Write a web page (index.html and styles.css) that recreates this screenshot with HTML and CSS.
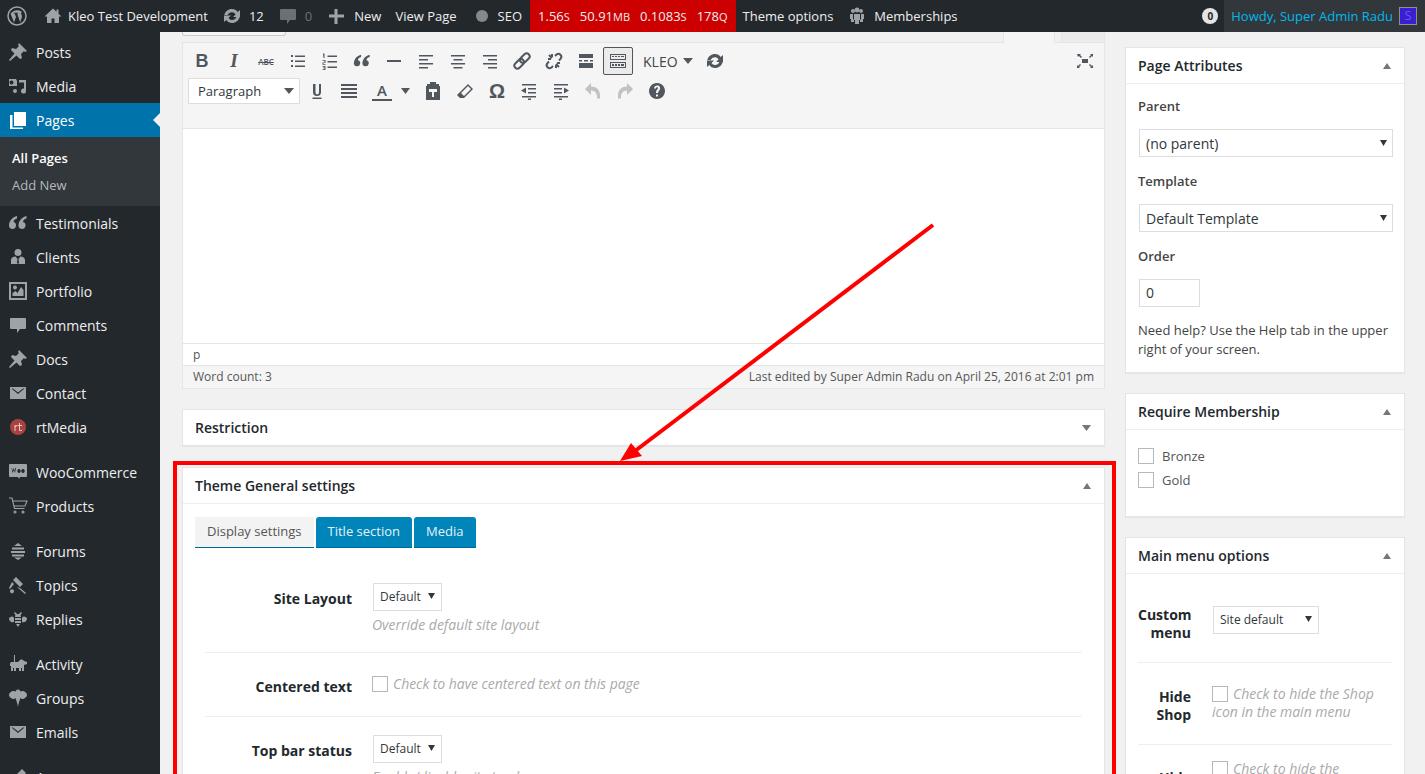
FILE: index.html
```html
<!DOCTYPE html>
<html lang="en">
<head>
    <meta charset="UTF-8">
    <meta name="viewport" content="width=device-width, initial-scale=1.0">
    <title>Edit Page</title>
    <link rel="stylesheet" href="styles.css">
</head>
<body>
    <svg class="defs" width="0" height="0">
        <symbol id="pin" viewBox="0 0 20 20"><path d="M11 1l8 8-2 1-1-1-3 3 1 4-2 1-3.500-3.500L2 19l-1-1 5.500-6.500L3 8l1-2 4 1 3-3-1-1z"/></symbol>
        <symbol id="mail" viewBox="0 0 20 20"><path d="M2 4h16v12H2zM3.500 5.500L10 11l6.500-5.500H15L10 9.500 5 5.500z" fill-rule="evenodd"/></symbol>
        <symbol id="bubble" viewBox="0 0 20 20"><path d="M3 3h14a1 1 0 0 1 1 1v9a1 1 0 0 1-1 1h-5l-3 4v-4H3a1 1 0 0 1-1-1V4a1 1 0 0 1 1-1z"/></symbol>
        <symbol id="quote" viewBox="0 0 20 20"><path d="M9 3C4.500 4 1 8 1 12.500a3.500 3.500 0 1 0 4.500-3.400C5.700 7 7 6 9 5.500zM18.500 3c-4.500 1-8 5-8 9.500a3.500 3.500 0 1 0 4.500-3.400c.2-2.100 1.500-3.100 3.500-3.600z"/></symbol>
        <symbol id="sync" viewBox="0 0 20 20"><path d="M10 3c2.500 0 4.500 1.200 5.700 3L18 4v7h-7l2.500-2.600C12.700 7 11.500 6.200 10 6.200 8 6.200 6.400 7.400 5.700 9H2.300C3.100 5.600 6.200 3 10 3zM2 9.500h7L6.500 12c.8 1.200 2 2 3.500 2 2 0 3.600-1.300 4.300-3h3.400c-.8 3.400-3.900 6-7.700 6-2.500 0-4.500-1.200-5.700-3L2 16z"/></symbol>
        <symbol id="sel" viewBox="0 0 10 6" preserveAspectRatio="none"><path d="M0 0h10L5 6z"/></symbol>
    </svg>

    <header class="adminbar">
        <div class="bar-item wp-logo">
            <svg width="20" height="20" viewBox="0 0 20 20"><circle cx="10" cy="10" r="9" fill="none" stroke="#9ea3a8" stroke-width="1.500"/><path d="M3.500 7.500L7 16.500l2-5.500-1.300-3.500H6.700V6.800h4.500v.7h-1l3 9 1.500-5c.5-1.700 0-2.500-.6-3.500-.5-.8 0-1.800 1-1.800-3-3-8.500-2.600-11 1z" fill="#9ea3a8"/></svg>
        </div>
        <div class="bar-item">
            <svg class="bar-icon home-icon" width="20" height="20" viewBox="0 0 20 20"><path d="M10 2.500L1.500 10.500h2.500V17h4.500v-4.500h3V17H16v-6.500h2.500L15.500 7.700V3.500h-2v2.300z" fill="#9ea3a8"/></svg>
            <span>Kleo Test Development</span>
        </div>
        <div class="bar-item">
            <svg class="bar-icon" width="20" height="20" fill="#9ea3a8"><use href="#sync"/></svg>
            <span>12</span>
        </div>
        <div class="bar-item muted">
            <svg class="bar-icon" width="20" height="20" fill="#6b7075"><use href="#bubble"/></svg>
            <span>0</span>
        </div>
        <div class="bar-item">
            <svg class="bar-icon plus-icon" width="20" height="20" viewBox="0 0 20 20"><path d="M8.500 3h3v5.500H18v3h-6.500V18h-3v-6.500H3v-3h5.500z" fill="#9ea3a8"/></svg>
            <span>New</span>
        </div>
        <div class="bar-item">View Page</div>
        <div class="bar-item seo-item">
            <span class="seo-dot"></span>
            <span>SEO</span>
        </div>
        <div class="bar-item query-monitor">
            <span>1.56<small>S</small></span>
            <span>50.91<small>MB</small></span>
            <span>0.1083<small>S</small></span>
            <span>178<small>Q</small></span>
        </div>
        <div class="bar-item">Theme options</div>
        <div class="bar-item">
            <svg class="bar-icon" width="20" height="20" viewBox="0 0 20 20" fill="#9ea3a8"><circle cx="6" cy="5" r="2"/><circle cx="14" cy="5" r="2"/><circle cx="10" cy="4" r="2.400"/><path d="M7 8h6v6h-1v4H8v-4H7zM3 8h3v5l1 1v2H4v-3H3zM14 8h3v5h-1v3h-3v-2l1-1z"/></svg>
            <span>Memberships</span>
        </div>
        <div class="bar-right">
            <span class="zero-badge">0</span>
            <div class="howdy">
                <span>Howdy, Super Admin Radu</span>
                <span class="avatar">S</span>
            </div>
        </div>
    </header>

    <div class="wrap">
        <nav class="sidebar">
            <ul class="menu">
                <li class="menu-item"><svg width="20" height="20"><use href="#pin"/></svg>Posts</li>
                <li class="menu-item">
                    <svg width="20" height="20" viewBox="0 0 20 20"><path d="M1 3h7l1 2v5H1zM3.500 4.500a2 2 0 1 0 .01 0zM11 4h7v11a2.500 2.500 0 1 1-2-2.400V6.500h-5zM7 13a2 2 0 1 1-2 2 2 2 0 0 1 2-2z" fill-rule="evenodd"/></svg>Media
                </li>
                <li class="menu-item current">
                    <svg width="20" height="20" viewBox="0 0 20 20"><path d="M6 2h12v14H6zM2 5h2.500v12.500H15V19H2z"/></svg>Pages
                </li>
                <li class="submenu">
                    <div class="sub-link active">All Pages</div>
                    <div class="sub-link">Add New</div>
                </li>
                <li class="menu-item"><svg width="20" height="20"><use href="#quote"/></svg>Testimonials</li>
                <li class="menu-item">
                    <svg width="20" height="20" viewBox="0 0 20 20"><circle cx="10" cy="5.500" r="3.500"/><path d="M3 17v-4c0-2 2-3.500 4.500-3.500L9.500 12 9 16l1 1 1-1-.5-4 2-2.500c2.500 0 4.500 1.500 4.500 3.500v4z"/></svg>Clients
                </li>
                <li class="menu-item">
                    <svg width="20" height="20" viewBox="0 0 20 20"><path d="M1 1h18v18H1zM3 3v14h14V3z" fill-rule="evenodd"/><path d="M4.500 15v-3l3-2 2 2 3.500-6 2.500 3v6zM7 4.500a2 2 0 1 1-.01 0z"/></svg>Portfolio
                </li>
                <li class="menu-item"><svg width="20" height="20"><use href="#bubble"/></svg>Comments</li>
                <li class="menu-item"><svg width="20" height="20"><use href="#pin"/></svg>Docs</li>
                <li class="menu-item"><svg width="20" height="20"><use href="#mail"/></svg>Contact</li>
                <li class="menu-item">
                    <svg width="20" height="20" viewBox="0 0 20 20"><circle cx="10" cy="10" r="8" fill="#a8433f"/><path d="M6.500 8h1v1c.5-.8 1-1 2-1v1.200c-1.200 0-2 .3-2 1.800v3h-1zM11 6h1v2h2v1h-2v3.500c0 .7.500.8 2 .6V14c-2 .3-3 0-3-1.500V9h-1V8h1z" fill="#e9c9c7"/></svg>rtMedia
                </li>
                <li class="menu-sep"></li>
                <li class="menu-item">
                    <svg width="20" height="20" viewBox="0 0 20 20"><path d="M2 2h16a1 1 0 0 1 1 1v11a1 1 0 0 1-1 1h-6l-1 2-1-2H2a1 1 0 0 1-1-1V3a1 1 0 0 1 1-1zM3.500 6l1 5 1.500-3 1 3 1-5h-.8l-.5 3-1-3-1.200 3-.5-3zM11 7a1.700 2 0 1 0 .01 0zM15 7a1.700 2 0 1 0 .01 0z" fill-rule="evenodd"/></svg>WooCommerce
                </li>
                <li class="menu-item">
                    <svg class="cart" width="20" height="20" viewBox="0 0 20 20"><path d="M1 2h3l2.500 10.500h10M5 5h14l-2 5H6"/><circle cx="7" cy="16" r="1"/><circle cx="15" cy="16" r="1"/></svg>Products
                </li>
                <li class="menu-sep"></li>
                <li class="menu-item">
                    <svg width="20" height="20" viewBox="0 0 20 20"><path d="M10 2l4 3H6zM4 6.500h12v2H4zM3 10h14v2H3zM4 13.500h12v2H4zM6 16.500h8L10 19z"/></svg>Forums
                </li>
                <li class="menu-item">
                    <svg width="20" height="20" viewBox="0 0 20 20"><path d="M8 2l7 7-3 3-7-7zM4 7l2 2-4 5-1-1zM9 12l3 1 6 5-1 1zM2 16a2 2 0 1 1 3 2 2 2 0 0 1-3-2z"/></svg>Topics
                </li>
                <li class="menu-item">
                    <svg width="20" height="20" viewBox="0 0 20 20"><path d="M7 3l2 2h2l2-2 1 1-1.500 2a3 3 0 0 1 .5 2H7a3 3 0 0 1 .5-2L6 4zM1 9c2-2 4-2 5 0v4C4 14 1 13 1 9zM19 9c-2-2-4-2-5 0v4c2 1 5 0 5-4zM7 9h6v2H7zM7 12h6v2H7zM8 15h4l-2 3z"/></svg>Replies
                </li>
                <li class="menu-sep"></li>
                <li class="menu-item">
                    <svg width="20" height="20" viewBox="0 0 20 20"><path d="M6 1h1v7H6zM2 10c0-1.500 1-2 2-2h6l2-2c2-1 3 0 4 1l3 1v2l-3 1v6h-2v-3h-1v3h-2v-3H8v3H6v-3H5v3H3v-5H2z"/></svg>Activity
                </li>
                <li class="menu-item">
                    <svg width="20" height="20" viewBox="0 0 20 20"><path d="M5.500 3c2 0 3.500 2 3.500 4s-2 4-3.500 4S1 9 1 7s2.500-4 4.500-4zM14.500 3c2 0 4.500 2 4.500 4s-3 4-4.500 4S11 9 11 7s1.500-4 3.500-4zM10 1.500c2 0 3 2 3 5S11 13 10 19c-1-6-3-9.500-3-12.500s1-5 3-5z"/></svg>Groups
                </li>
                <li class="menu-item"><svg width="20" height="20"><use href="#mail"/></svg>Emails</li>
                <li class="menu-sep"></li>
                <li class="menu-item">
                    <svg width="20" height="20" viewBox="0 0 20 20"><path d="M14 2l4 4-7 7-4-4zM6 10l4 4c-1 3-4 4-8 4 2-2 1-6 4-8z"/></svg>Appearance
                </li>
            </ul>
        </nav>

        <main class="content">
            <div class="center-col">
                <div class="editor-tabs">
                    <div class="tab-stub"></div>
                    <div class="tab-gap"></div>
                    <div class="tab-visual"></div>
                    <div class="tab-text"></div>
                </div>
                <div class="editor">
                    <div class="toolbar">
                        <div class="tool-row">
                            <span class="tool glyph-b">B</span>
                            <span class="tool glyph-i">I</span>
                            <span class="tool glyph-abc">ABC</span>
                            <span class="tool"><svg width="20" height="20" viewBox="0 0 20 20"><path d="M3 4h2v2H3zM3 9h2v2H3zM3 14h2v2H3zM7 4.500h10V6H7zM7 9.500h10V11H7zM7 14.500h10V16H7z"/></svg></span>
                            <span class="tool"><svg width="20" height="20" viewBox="0 0 20 20"><path d="M3 2.500h1.500V7h-1zM2.500 9h3v3h-2v1h2v.8h-3V11.500h2v-1.700h-2zM2.500 15h3v4h-3v-.7h2v-1h-1.500v-.7h1.500v-.9h-2zM7.500 4.500H17V6H7.500zM7.500 10H17v1.500H7.500zM7.500 15.500H17V17H7.500z"/></svg></span>
                            <span class="tool"><svg width="18" height="18"><use href="#quote"/></svg></span>
                            <span class="tool"><svg width="20" height="20" viewBox="0 0 20 20"><path d="M3 9h14v2H3z"/></svg></span>
                            <span class="tool"><svg width="20" height="20" viewBox="0 0 20 20"><path d="M3 4h14v1.500H3zM3 8h9v1.500H3zM3 12h14v1.500H3zM3 16h9v1.500H3z"/></svg></span>
                            <span class="tool"><svg width="20" height="20" viewBox="0 0 20 20"><path d="M3 4h14v1.500H3zM5.500 8h9v1.500h-9zM3 12h14v1.500H3zM5.500 16h9v1.500h-9z"/></svg></span>
                            <span class="tool"><svg width="20" height="20" viewBox="0 0 20 20"><path d="M3 4h14v1.500H3zM8 8h9v1.500H8zM3 12h14v1.500H3zM8 16h9v1.500H8z"/></svg></span>
                            <span class="tool"><svg class="chain" width="20" height="20" viewBox="0 0 20 20"><g transform="rotate(-45 10 10)"><rect x="0.500" y="7" width="11" height="6" rx="3"/><rect x="8.500" y="7" width="11" height="6" rx="3"/></g></svg></span>
                            <span class="tool"><svg class="chain" width="20" height="20" viewBox="0 0 20 20"><path d="M11 5l1.500-1.500a3 3 0 0 1 4.200 4.200L15 9.500M9 15l-1.500 1.500a3 3 0 0 1-4.200-4.200L5 10.500M5 4l3 3M15 16l-3-3M4 8h3M13 12h3M8 3v3M12 14v3"/></svg></span>
                            <span class="tool"><svg width="20" height="20" viewBox="0 0 20 20"><path d="M3 3h14v4H3zM3 9h3v1.500H3zM8 9h4v1.500H8zM14 9h3v1.500h-3zM3 12h14v5H3z"/></svg></span>
                            <span class="tool tool-on"><svg width="20" height="20" viewBox="0 0 20 20"><path d="M2 3h16v6H2zM3 4v4h14V4zM4 5h2v1H4zM7 5h2v1H7zM10 5h2v1h-2zM13 5h3v1h-3zM2 11h16v6H2zM3 12v4h14v-4zM4 13h2v2H4zM7 13h2v2H7zM10 13h2v2h-2zM13 13h3v2h-3z" fill-rule="evenodd"/></svg></span>
                            <span class="kleo-menu">KLEO<svg width="10" height="6" fill="#50575e"><use href="#sel"/></svg></span>
                            <span class="tool"><svg width="20" height="20"><use href="#sync"/></svg></span>
                            <span class="tool tool-full"><svg width="20" height="20" viewBox="0 0 20 20"><path d="M7 8h6v4H7zM2 3h4L5 4l2 2-1 1-2-2-1 1zM18 3v3l-1-1-2 2-1-1 2-2-1-1zM2 17v-3l1 1 2-2 1 1-2 2 1 1zM18 17h-3l1-1-2-2 1-1 2 2 1-1z"/></svg></span>
                        </div>
                        <div class="tool-row">
                            <span class="format-select">Paragraph<svg width="10" height="6" fill="#50575e"><use href="#sel"/></svg></span>
                            <span class="tool"><svg width="20" height="20" viewBox="0 0 20 20"><path d="M6 3h2.500v8c0 1.500.6 2.300 1.700 2.300s1.800-.8 1.800-2.300V3H14v8c0 3-1.700 4-4 4s-4-1-4-4zM5.500 16.500h9V18h-9z"/></svg></span>
                            <span class="tool"><svg width="20" height="20" viewBox="0 0 20 20"><path d="M2 3h16v2H2zM2 7h16v2H2zM2 11h16v2H2zM2 15h16v2H2z"/></svg></span>
                            <span class="tool color-tool"><span class="color-a">A</span><svg width="9" height="6" fill="#50575e"><use href="#sel"/></svg></span>
                            <span class="tool"><svg width="20" height="20" viewBox="0 0 20 20"><path d="M7 1h6v2h3v2H4V3h3zM3 5h14v14H3zM6 8v3h3v5h2v-5h3V8z" fill-rule="evenodd"/></svg></span>
                            <span class="tool"><svg width="20" height="20" viewBox="0 0 20 20"><path d="M13 3l5 5-9 9H5l-3-3zM13 5L6 12l3 3 7-7z" fill-rule="evenodd"/></svg></span>
                            <span class="tool glyph-omega">Ω</span>
                            <span class="tool"><svg width="20" height="20" viewBox="0 0 20 20"><path d="M3 3h14v1.500H3zM9 7h8v1.500H9zM9 11h8v1.500H9zM3 15h14v1.500H3zM7 6.500v6L2 9.500zM9 17.500h3V19H9z"/></svg></span>
                            <span class="tool"><svg width="20" height="20" viewBox="0 0 20 20"><path d="M3 3h14v1.500H3zM3 7h8v1.500H3zM3 11h8v1.500H3zM3 15h14v1.500H3zM13 6.500v6l5-3zM8 17.500h3V19H8z"/></svg></span>
                            <span class="tool tool-off"><svg width="20" height="20" viewBox="0 0 20 20"><path d="M2 8l6-6v3.500c5 0 9 3 9 9v3h-3v-2c0-3-2-6-6-6V14z"/></svg></span>
                            <span class="tool tool-off"><svg width="20" height="20" viewBox="0 0 20 20"><path d="M18 8l-6-6v3.500c-5 0-9 3-9 9v3h3v-2c0-3 2-6 6-6V14z"/></svg></span>
                            <span class="tool"><svg width="20" height="20" viewBox="0 0 20 20"><path d="M10 2a8 8 0 1 1-.01 0zM9 13.500v2h2v-2zM7 7.500h2c0-2 2.500-1.500 2-.2C10.700 8.500 9 9 9 12h2c0-2 2.500-2.500 2-5.500C12.500 3.500 7 4 7 7.500z" fill-rule="evenodd"/></svg></span>
                        </div>
                    </div>
                    <div class="edit-area"></div>
                    <div class="status-path">p</div>
                    <div class="status-info">
                        <span>Word count: 3</span>
                        <span>Last edited by Super Admin Radu on April 25, 2016 at 2:01 pm</span>
                    </div>
                </div>

                <section class="box box-closed">
                    <div class="box-head">
                        <h2>Restriction</h2>
                        <svg class="toggle" width="9" height="6" fill="#72777c"><use href="#sel"/></svg>
                    </div>
                </section>

                <section class="box">
                    <div class="box-head">
                        <h2>Theme General settings</h2>
                        <span class="toggle-up"></span>
                    </div>
                    <div class="theme-body">
                        <div class="theme-tabs">
                            <span class="theme-tab selected">Display settings</span>
                            <span class="theme-tab">Title section</span>
                            <span class="theme-tab">Media</span>
                        </div>
                        <div class="field">
                            <label class="field-label">Site Layout</label>
                            <div class="field-main">
                                <span class="small-select">Default<svg width="7" height="6" fill="#32373c"><use href="#sel"/></svg></span>
                                <p class="hint">Override default site layout</p>
                            </div>
                        </div>
                        <div class="field field-check">
                            <label class="field-label">Centered text</label>
                            <div class="field-main check-line">
                                <span class="check"></span>
                                <span class="hint">Check to have centered text on this page</span>
                            </div>
                        </div>
                        <div class="field field-last">
                            <label class="field-label">Top bar status</label>
                            <div class="field-main">
                                <span class="small-select">Default<svg width="7" height="6" fill="#32373c"><use href="#sel"/></svg></span>
                                <p class="hint">Enable/disable site top bar</p>
                            </div>
                        </div>
                    </div>
                </section>
            </div>

            <aside class="side-col">
                <section class="box">
                    <div class="box-head">
                        <h2>Page Attributes</h2>
                        <span class="toggle-up"></span>
                    </div>
                    <div class="attr-body">
                        <p class="attr-label">Parent</p>
                        <span class="wide-select">(no parent)<svg width="7" height="6" fill="#32373c"><use href="#sel"/></svg></span>
                        <p class="attr-label">Template</p>
                        <span class="wide-select">Default Template<svg width="7" height="6" fill="#32373c"><use href="#sel"/></svg></span>
                        <p class="attr-label">Order</p>
                        <span class="order-input">0</span>
                        <p class="attr-help">Need help? Use the Help tab in the upper right of your screen.</p>
                    </div>
                </section>
                <section class="box">
                    <div class="box-head">
                        <h2>Require Membership</h2>
                        <span class="toggle-up"></span>
                    </div>
                    <div class="member-body">
                        <div class="member-row"><span class="check"></span>Bronze</div>
                        <div class="member-row"><span class="check"></span>Gold</div>
                    </div>
                </section>
                <section class="box">
                    <div class="box-head">
                        <h2>Main menu options</h2>
                        <span class="toggle-up"></span>
                    </div>
                    <div class="menu-opts">
                        <div class="opt opt-first">
                            <label class="opt-label">Custom menu</label>
                            <span class="small-select site-default">Site default<svg width="7" height="6" fill="#32373c"><use href="#sel"/></svg></span>
                        </div>
                        <div class="opt">
                            <label class="opt-label">Hide Shop</label>
                            <p class="hint"><span class="check"></span>Check to hide the Shop icon in the main menu</p>
                        </div>
                        <div class="opt opt-last">
                            <label class="opt-label">Hide</label>
                            <p class="hint"><span class="check"></span>Check to hide the</p>
                        </div>
                    </div>
                </section>
            </aside>
        </main>
    </div>

    <!-- annotation drawn on top of the screenshot -->
    <div class="red-frame"></div>
    <svg class="red-arrow" width="340" height="260" viewBox="0 0 340 260">
        <path d="M313 3L15 229" stroke="#f00" stroke-width="4" fill="none"/>
        <path d="M0 239L11 221 22 234z" fill="#f00"/>
    </svg>
</body>
</html>
```

FILE: styles.css
```css
* {
    box-sizing: border-box;
    margin: 0;
    padding: 0;
}
html, body {
    width: 100%;
    height: 100%;
    overflow: hidden;
}
body {
    background-color: #f1f1f1;
    color: #444;
    font-family: "Open Sans", sans-serif;
    font-size: 13px;
}
.defs {
    display: block;
    height: 0;
}

/* admin bar */
.adminbar {
    display: flex;
    height: 32px;
    background-color: #23282d;
    color: #eee;
    font-size: 13px;
    line-height: 32px;
}
.bar-item {
    display: flex;
    align-items: center;
    padding: 0 7px;
    white-space: nowrap;
}
.bar-icon {
    margin-right: 7px;
}
.home-icon {
    margin-right: 5px;
}
.plus-icon {
    margin-right: 8px;
}
.wp-logo {
    width: 36px;
}
.muted {
    color: #6b7075;
}
.seo-item {
    margin-right: 1px;
}
.seo-dot {
    width: 12px;
    height: 12px;
    margin: 0 10px 0 5px;
    border-radius: 50%;
    background-color: #888;
}
.query-monitor {
    gap: 10px;
    padding: 0 8px;
    background-color: #c00;
    color: #eee;
}
.query-monitor small {
    font-size: 11px;
}
.bar-right {
    display: flex;
    align-items: center;
    margin-left: auto;
}
.zero-badge {
    width: 16px;
    height: 16px;
    margin-right: 6px;
    border-radius: 50%;
    background-color: #e4e4e4;
    color: #23282d;
    font-size: 10px;
    font-weight: 700;
    line-height: 16px;
    text-align: center;
}
.howdy {
    display: flex;
    align-items: center;
    gap: 6px;
    height: 32px;
    padding: 0 8px 0 7px;
    background-color: #32373c;
    color: #00b9eb;
}
.avatar {
    width: 18px;
    height: 18px;
    border: 1px solid #8d8f94;
    background-color: #3a1fd1;
    color: #6a55e8;
    font-size: 13px;
    line-height: 15px;
    text-align: center;
}

/* left menu */
.wrap {
    display: flex;
    height: 742px;
}
.sidebar {
    flex: none;
    width: 160px;
    overflow: hidden;
    background-color: #23282d;
    color: #eee;
    font-size: 14px;
}
.menu {
    padding-top: 3px;
    list-style: none;
}
.menu-item {
    display: flex;
    align-items: center;
    gap: 8px;
    height: 34px;
    padding-left: 8px;
    white-space: nowrap;
}
.menu-item svg {
    flex: none;
    fill: #9ea3a8;
}
.menu-item .cart {
    fill: none;
    stroke: #9ea3a8;
    stroke-width: 1.100;
}
.menu-sep {
    height: 11px;
}
.current {
    position: relative;
    background-color: #0073aa;
    color: #fff;
}
.menu-item.current svg {
    fill: #fff;
}
.current::after {
    content: "";
    position: absolute;
    right: 0;
    top: 10px;
    border: 7px solid transparent;
    border-right-color: #f1f1f1;
    border-left-width: 0;
}
.submenu {
    padding: 8px 0 7px;
    background-color: #32373c;
    font-size: 13px;
}
.sub-link {
    padding-left: 12px;
    color: #b4b9be;
    line-height: 27px;
}
.sub-link.active {
    color: #fff;
    font-weight: 600;
}

/* main columns */
.content {
    display: flex;
    flex: 1;
    gap: 20px;
    padding: 0 20px 0 22px;
    overflow: hidden;
}
.center-col {
    flex: none;
    width: 923px;
}
.side-col {
    flex: none;
    width: 280px;
    padding-top: 15px;
}

/* editor */
.editor-tabs {
    display: flex;
    height: 10px;
}
.tab-stub {
    width: 104px;
    height: 4px;
    border: 1px solid #ccc;
    border-top: 0;
    border-radius: 0 0 3px 3px;
    background-color: #f5f5f5;
}
.tab-gap {
    width: 717px;
}
.tab-visual {
    position: relative;
    z-index: 1;
    width: 52px;
    height: 11px;
    border-left: 1px solid #e5e5e5;
    border-right: 1px solid #e5e5e5;
    background-color: #f5f5f5;
}
.tab-text {
    width: 44px;
    margin-left: 6px;
    border-left: 1px solid #e5e5e5;
    border-right: 1px solid #e5e5e5;
    background-color: #ebebeb;
}
.editor {
    border: 1px solid #e5e5e5;
    background-color: #f5f5f5;
}
.toolbar {
    height: 86px;
    padding: 3px 4px 0;
    border-bottom: 1px solid #e5e5e5;
}
.tool-row {
    display: flex;
    align-items: center;
    gap: 2px;
    height: 30px;
}
.tool {
    display: flex;
    flex: none;
    align-items: center;
    justify-content: center;
    width: 30px;
    height: 28px;
    color: #50575e;
}
.tool svg {
    fill: #50575e;
}
.tool .chain {
    fill: none;
    stroke: #50575e;
    stroke-width: 2;
}
.tool-on {
    border: 1px solid #555;
    border-radius: 2px;
    background-color: #ebebeb;
}
.tool-off svg {
    fill: #c0c2c4;
}
.tool-full {
    margin-left: auto;
}
.glyph-b {
    font-family: "Liberation Sans", sans-serif;
    font-size: 18px;
    font-weight: 700;
}
.glyph-i {
    font-family: "Liberation Serif", serif;
    font-size: 19px;
    font-style: italic;
    font-weight: 700;
}
.glyph-abc {
    font-size: 8px;
    font-weight: 600;
    text-decoration: line-through;
}
.glyph-omega {
    font-family: "Liberation Sans", sans-serif;
    font-size: 20px;
    font-weight: 700;
}
.kleo-menu {
    display: flex;
    align-items: center;
    gap: 5px;
    padding: 0 5px 0 8px;
    color: #444;
    font-size: 14px;
}
.format-select {
    display: flex;
    align-items: center;
    justify-content: space-between;
    width: 112px;
    height: 26px;
    margin-left: 1px;
    padding: 0 5px 0 9px;
    border: 1px solid #ddd;
    background-color: #fff;
    color: #32373c;
}
.color-tool {
    gap: 9px;
    justify-content: flex-start;
    width: 50px;
    padding-left: 6px;
}
.color-a {
    width: 20px;
    border-bottom: 2px solid #50575e;
    font-size: 15px;
    font-weight: 600;
    line-height: 17px;
    text-align: center;
}
.edit-area {
    height: 214px;
    background-color: #fff;
}
.status-path {
    height: 22px;
    padding: 0 10px;
    border-top: 1px solid #e5e5e5;
    background-color: #fff;
    color: #555;
    font-size: 12px;
    line-height: 21px;
}
.status-info {
    display: flex;
    justify-content: space-between;
    height: 23px;
    padding: 0 10px;
    border-top: 1px solid #e5e5e5;
    color: #555;
    font-size: 12px;
    line-height: 21px;
}

/* meta boxes */
.box {
    margin-top: 20px;
    border: 1px solid #e5e5e5;
    background-color: #fff;
    box-shadow: 0 1px 1px rgba(0, 0, 0, 0.04);
}
.box-closed + .box {
    margin-top: 21px;
}
.side-col .box:first-child {
    margin-top: 0;
}
.box-head {
    display: flex;
    align-items: center;
    justify-content: space-between;
    height: 36px;
    padding: 0 12px;
    border-bottom: 1px solid #eee;
}
.box-closed .box-head {
    height: 35px;
    border-bottom: 0;
}
.box-head h2 {
    color: #23282d;
    font-size: 14px;
    font-weight: 600;
}
.toggle {
    margin-right: 1px;
}
.toggle-up {
    width: 0;
    height: 0;
    margin-right: 1px;
    border: 4px solid transparent;
    border-top: 0;
    border-bottom: 6px solid #72777c;
}
.theme-body {
    padding: 13px 12px 0;
}
.theme-tabs {
    display: flex;
    gap: 2px;
    height: 31px;
}
.theme-tab {
    padding: 0 12px;
    border-bottom: 1px solid #00699b;
    border-radius: 3px 3px 0 0;
    background-color: #0085ba;
    color: #e4f2f8;
    line-height: 29px;
}
.theme-tab:last-child {
    padding-right: 13px;
}
.theme-tab.selected {
    border-radius: 0;
    background-color: #f3f3f3;
    color: #555;
}
.field {
    display: flex;
    gap: 21px;
    margin: 0 10px;
    padding: 35px 0 18px;
    border-bottom: 1px solid #eee;
}
.field-check {
    padding: 19px 0 20px;
}
.field-last {
    padding-top: 18px;
    border-bottom: 0;
}
.field-label {
    width: 147px;
    padding-top: 6px;
    color: #23282d;
    font-size: 14px;
    font-weight: 700;
    text-align: right;
}
.field-check .field-label {
    padding-top: 5px;
}
.field-main {
    flex: 1;
}
.check-line {
    display: flex;
    align-items: center;
    align-self: flex-start;
    gap: 5px;
    margin-left: -1px;
    padding-top: 2px;
    letter-spacing: -0.050px;
}
.small-select {
    display: inline-flex;
    align-items: center;
    justify-content: space-between;
    width: 69px;
    height: 28px;
    padding: 0 6px 2px 6px;
    border: 1px solid #ddd;
    background-color: #fff;
    color: #32373c;
    font-size: 12px;
}
.hint {
    color: #aaa;
    font-size: 14px;
    font-style: italic;
}
.field-main .hint {
    display: block;
    margin: 4px 0 0 -1px;
}
.check-line .hint {
    margin: 0;
}
.check {
    display: inline-block;
    flex: none;
    width: 16px;
    height: 16px;
    border: 1px solid #b4b9be;
    background-color: #fff;
}

/* side column */
.attr-body {
    padding: 13px 12px 13px;
}
.attr-label {
    margin-bottom: 14px;
    color: #444;
    font-weight: 600;
}
.wide-select {
    display: flex;
    align-items: center;
    justify-content: space-between;
    height: 28px;
    margin: 0 -1px 15px 1px;
    padding: 0 5px 0 6px;
    border: 1px solid #ddd;
    background-color: #fff;
    color: #32373c;
    font-size: 14px;
}
.order-input {
    display: block;
    width: 61px;
    height: 28px;
    margin: 0 0 14px 1px;
    padding-left: 6px;
    border: 1px solid #ddd;
    color: #32373c;
    font-size: 14px;
    line-height: 26px;
}
.attr-help {
    line-height: 19px;
}
.member-body {
    padding: 14px 12px 24px;
}
.member-row {
    display: flex;
    align-items: center;
    gap: 8px;
    height: 24px;
    color: #555;
}
.menu-opts {
    padding: 0 12px;
}
.opt {
    display: flex;
    gap: 21px;
    padding: 22px 0 20px;
    border-bottom: 1px solid #eee;
}
.opt-first {
    padding: 32px 0 20px;
}
.opt-last {
    padding-top: 15px;
    border-bottom: 0;
}
.opt-label {
    flex: none;
    width: 53px;
    margin-top: 3px;
    color: #23282d;
    font-size: 14px;
    font-weight: 700;
    line-height: 18px;
    text-align: right;
}
.opt-first .opt-label {
    margin-top: 0;
}
.opt-last .opt-label {
    margin-top: 9px;
}
.opt .hint {
    line-height: 18px;
}
.opt .check {
    margin-right: 5px;
    vertical-align: -3px;
}
.site-default {
    width: 106px;
    height: 28px;
    margin-left: 1px;
}

/* red annotation */
.red-frame {
    position: absolute;
    left: 173px;
    top: 461px;
    width: 943px;
    height: 330px;
    border: 4px solid #f00;
}
.red-arrow {
    position: absolute;
    left: 620px;
    top: 222px;
}
```
